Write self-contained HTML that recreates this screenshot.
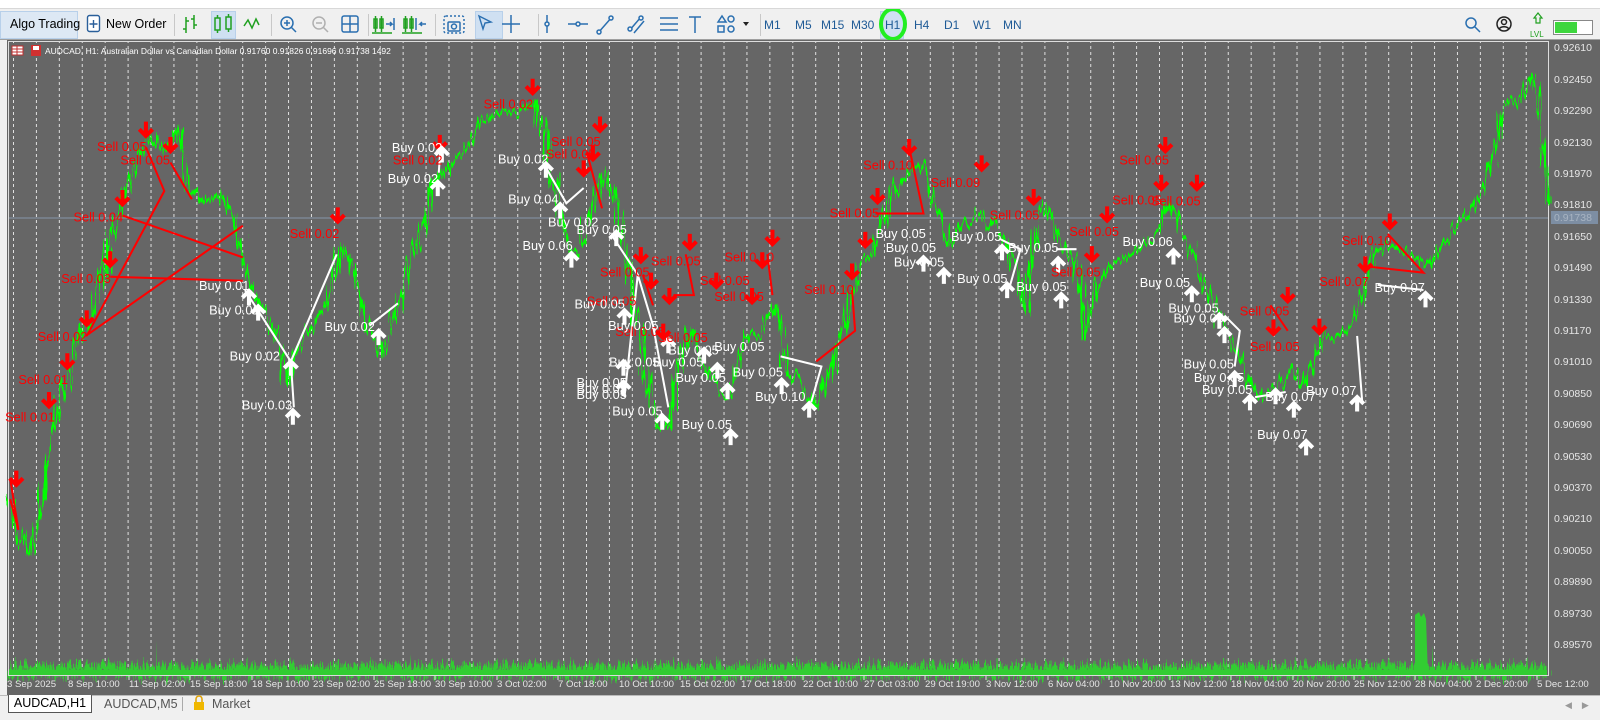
<!DOCTYPE html>
<html><head><meta charset="utf-8"><style>
*{margin:0;padding:0;box-sizing:border-box}
body{width:1600px;height:720px;overflow:hidden;background:#f0f0f0;font-family:"Liberation Sans",Arial,sans-serif;position:relative}
.abs{position:absolute}
.tb{top:8px;left:0;width:1600px;height:32px;background:#f0f0f0;border-top:1px solid #d8d8d8;border-bottom:1px solid #a0a0a0}
.t{position:absolute;top:9px;font-size:12.5px;color:#000}
.tf{position:absolute;top:9px;font-size:12px;color:#1e5a96}
.sep{position:absolute;top:5px;width:1px;height:22px;background:#c8c8c8}
.hl{position:absolute;top:2px;height:28px;background:#cfe0f2;border:1px solid #b8d0ea}
</style></head><body>
<div class="abs" style="top:0;left:0;width:1600px;height:8px;background:#fff"></div>
<div class="abs tb">
 <div class="hl" style="left:0;width:78px;background:#dde8f4"></div>
 <div class="t" style="left:10px;top:8px">Algo Trading</div>
 <svg class="abs" style="left:86px;top:5px" width="16" height="20"><rect x="1.5" y="1.5" width="12" height="16" rx="2" fill="#fff" stroke="#2a5f9a" stroke-width="1.4"/><path d="M7.5 6v8M3.5 10h8" stroke="#2a5f9a" stroke-width="1.4"/></svg>
 <div class="t" style="left:106px;top:8px">New Order</div>
 <div class="sep" style="left:174px"></div>
 <div class="hl" style="left:211px;width:25px"></div>
 <div class="sep" style="left:271px"></div>
 <div class="sep" style="left:368px"></div>
 <div class="sep" style="left:435px"></div>
 <div class="hl" style="left:475px;width:28px"></div>
 <div class="sep" style="left:538px"></div>
 <div class="sep" style="left:760px"></div>
 <div class="hl" style="left:880px;width:24px"></div>
 <svg class="abs" style="left:0;top:0" width="1600" height="32" fill="none" stroke-width="1.5">
  <g stroke="#20a020"><path d="M186 8v16M186 20h-3M186 12h3M194 6v14M194 10h-3M194 16h3"/>
   <rect x="215" y="9" width="5" height="12"/><path d="M217.5 6v3M217.5 21v3"/><rect x="226" y="8" width="5" height="12"/><path d="M228.5 5v3M228.5 20v3"/>
   <path d="M244 17l4-6 4 8 4-9 3 6"/>
   <rect x="374" y="10" width="3" height="9"/><rect x="380" y="10" width="3" height="9"/><path d="M375.5 7v16M381.5 7v16M372 24h20"/>
   <rect x="404" y="10" width="3" height="9"/><rect x="410" y="10" width="3" height="9"/><path d="M405.5 7v16M411.5 7v16M402 24h20"/>
  </g>
  <g stroke="#2a6fb0"><path d="M386 15h6l-2-2M392 15l-2 2M394 9v12"/><path d="M426 15h-6l2-2M420 15l2 2M416 9v12"/>
   <circle cx="287" cy="14" r="6"/><path d="M291 18l5 5M284 14h6M287 11v6"/>
   <g stroke="#b0b0b0"><circle cx="319" cy="14" r="6"/><path d="M323 18l5 5M316 14h6"/></g>
   <rect x="342" y="7" width="16" height="16" rx="2"/><path d="M350 7v16M342 15h16"/>
   <rect x="444" y="7" width="20" height="17" rx="2" stroke-dasharray="2 2"/><rect x="448" y="13" width="12" height="9" rx="1"/><circle cx="454" cy="17.5" r="2.5"/>
   <path d="M479 7l12 6-6 1-2 6z" stroke-width="1.4"/>
   <path d="M511 6v18M502 15h18"/><path d="M547 6v18"/><circle cx="547" cy="15" r="2" fill="#f0f0f0"/>
   <path d="M568 15h20"/><circle cx="578" cy="15" r="2" fill="#f0f0f0"/>
   <path d="M598 24l14-16"/><circle cx="599" cy="23" r="2" fill="#f0f0f0"/><circle cx="611" cy="9" r="2" fill="#f0f0f0"/>
   <path d="M629 22l12-14M634 24l10-12"/><circle cx="630" cy="20" r="2" fill="#f0f0f0"/><circle cx="641" cy="9" r="2" fill="#f0f0f0"/>
   <path d="M660 9h18M660 15h18M660 21h18"/>
   <path d="M689 8h12M695 8v16"/>
   <path d="M718 13l4-6 4 6z"/><circle cx="731" cy="10" r="3"/><rect x="718" y="17" width="6" height="6"/><circle cx="731" cy="20" r="3"/>
   <circle cx="1471" cy="14" r="5"/><path d="M1475 18l5 5"/>
   <circle cx="1504" cy="15" r="7" stroke="#222"/><circle cx="1504" cy="13" r="2.5" stroke="#222"/><path d="M1499 20c2-3 8-3 10 0" stroke="#222"/>
  </g>
  <path d="M743 13l3 4 3-4z" fill="#222" stroke="none"/>
  <path d="M1538 4l-4 5h2v5h4v-5h2z" stroke="#20a020" stroke-width="1.2"/>
  <text x="1530" y="28" font-size="8" fill="#20a020" stroke="none" font-family="Liberation Sans">LVL</text>
  <rect x="1553.5" y="11.5" width="39" height="14" fill="#fff" stroke="#888" stroke-width="1"/><rect x="1555" y="13" width="22" height="11" fill="#3ed63e" stroke="none"/>
  <ellipse cx="893" cy="15" rx="12" ry="15" stroke="#22ee22" stroke-width="4"/>
 </svg>
 <div class="tf" style="left:764px">M1</div><div class="tf" style="left:795px">M5</div><div class="tf" style="left:821px">M15</div><div class="tf" style="left:851px">M30</div><div class="tf" style="left:885px">H1</div><div class="tf" style="left:914px">H4</div><div class="tf" style="left:944px">D1</div><div class="tf" style="left:973px">W1</div><div class="tf" style="left:1003px">MN</div>
</div>

<svg class="abs" style="left:0;top:40px" width="1600" height="655">
 <defs>
  <filter id="nz" x="-5%" y="-20%" width="110%" height="140%"><feTurbulence type="fractalNoise" baseFrequency="0.35 0.02" numOctaves="2" seed="3"/><feDisplacementMap in="SourceGraphic" scale="22" xChannelSelector="B" yChannelSelector="G"/></filter>
  <filter id="nz2" x="-5%" y="-100%" width="110%" height="300%"><feTurbulence type="fractalNoise" baseFrequency="0.6 0.01" numOctaves="3" seed="7"/><feDisplacementMap in="SourceGraphic" scale="26" xChannelSelector="B" yChannelSelector="G"/></filter>
  <pattern id="vl" x="13" y="0" width="22.92" height="655" patternUnits="userSpaceOnUse"><line x1="0.5" y1="0" x2="0.5" y2="655" stroke="#e0e0e0" stroke-width="1" stroke-dasharray="3 3"/></pattern>
  <g id="dn"><path d="M0,-17V-3M-6.5,-9.5L0,-3L6.5,-9.5" stroke="#ff0000" stroke-width="4" fill="none"/></g>
  <g id="up"><path d="M0,17V3M-6.5,9.5L0,3L6.5,9.5" stroke="#ffffff" stroke-width="4" fill="none"/></g>
 </defs>
 <rect x="0" y="0" width="7" height="655" fill="#f0f0f0"/>
 <rect x="7" y="0" width="1593" height="655" fill="#666"/>
 <rect x="8" y="1" width="1540" height="635" fill="url(#vl)"/>
 <line x1="8" y1="178" x2="1549" y2="178" stroke="#8596aa" stroke-width="1"/>
 <!-- volumes -->
 <g filter="url(#nz2)"><rect x="9" y="625" width="1538" height="11" fill="#32cd32"/></g>
 <rect x="9" y="630" width="1538" height="6" fill="#32cd32"/>
 <path d="M1415 636V575l4-3 2 5 3-4 2 6 2 57z" fill="#32cd32"/>
 <path d="M156 636V600l1 36z M1432 636V605l2 31z M410 636v-22l2 22z M718 636v-20l2 20z" fill="#32cd32"/>
 <rect x="8.5" y="1.5" width="1540" height="634" fill="none" stroke="#ddd" stroke-width="1"/>
 <!-- header -->
 <rect x="12" y="6" width="11" height="9" fill="#fff" stroke="#c03030"/><path d="M12 9h11M12 12h11M17 6v9" stroke="#c03030"/>
 <rect x="31" y="5" width="10" height="11" fill="#d03030"/><rect x="33" y="6" width="6" height="4" fill="#fff"/>
 <text x="45" y="14" font-size="8.5" fill="#fff" font-family="Liberation Sans">AUDCAD, H1:  Australian Dollar vs Canadian Dollar  0.91760 0.91826 0.91696 0.91738  1492</text>
 <!-- price axis -->
 <g font-size="10.5" fill="#e6e6e6" font-family="Liberation Sans">
  <text x="1554" y="11">0.92610</text><text x="1554" y="43">0.92450</text><text x="1554" y="74">0.92290</text><text x="1554" y="106">0.92130</text><text x="1554" y="137">0.91970</text><text x="1554" y="168">0.91810</text><text x="1554" y="200">0.91650</text><text x="1554" y="231">0.91490</text><text x="1554" y="263">0.91330</text><text x="1554" y="294">0.91170</text><text x="1554" y="325">0.91010</text><text x="1554" y="357">0.90850</text><text x="1554" y="388">0.90690</text><text x="1554" y="420">0.90530</text><text x="1554" y="451">0.90370</text><text x="1554" y="482">0.90210</text><text x="1554" y="514">0.90050</text><text x="1554" y="545">0.89890</text><text x="1554" y="577">0.89730</text><text x="1554" y="608">0.89570</text>
 </g>
 <rect x="1551" y="171" width="47" height="13" fill="#7d8ea3"/><text x="1554" y="181" font-size="10.5" fill="#a8b4c2" font-family="Liberation Sans">0.91738</text>
 <!-- time axis -->
 <g font-size="9.6" fill="#e6e6e6" font-family="Liberation Sans">
  <text x="7" y="647">3 Sep 2025</text><text x="68" y="647">8 Sep 10:00</text><text x="129" y="647">11 Sep 02:00</text><text x="190" y="647">15 Sep 18:00</text><text x="252" y="647">18 Sep 10:00</text><text x="313" y="647">23 Sep 02:00</text><text x="374" y="647">25 Sep 18:00</text><text x="435" y="647">30 Sep 10:00</text><text x="497" y="647">3 Oct 02:00</text><text x="558" y="647">7 Oct 18:00</text><text x="619" y="647">10 Oct 10:00</text><text x="680" y="647">15 Oct 02:00</text><text x="741" y="647">17 Oct 18:00</text><text x="803" y="647">22 Oct 10:00</text><text x="864" y="647">27 Oct 03:00</text><text x="925" y="647">29 Oct 19:00</text><text x="986" y="647">3 Nov 12:00</text><text x="1048" y="647">6 Nov 04:00</text><text x="1109" y="647">10 Nov 20:00</text><text x="1170" y="647">13 Nov 12:00</text><text x="1231" y="647">18 Nov 04:00</text><text x="1293" y="647">20 Nov 20:00</text><text x="1354" y="647">25 Nov 12:00</text><text x="1415" y="647">28 Nov 04:00</text><text x="1476" y="647">2 Dec 20:00</text><text x="1537" y="647">5 Dec 12:00</text>
 </g>
 <g stroke="#ddd"><path d="M68 636v4M129 636v4M190 636v4M252 636v4M313 636v4M374 636v4M435 636v4M497 636v4M558 636v4M619 636v4M680 636v4M741 636v4M803 636v4M864 636v4M925 636v4M986 636v4M1048 636v4M1109 636v4M1170 636v4M1231 636v4M1293 636v4M1354 636v4M1415 636v4M1476 636v4M1537 636v4"/></g>
 <!-- overlay in view coords -->
 <g transform="translate(0,-40.8) scale(1.0204)">
  <g filter="url(#nz)"><polyline fill="none" stroke="#00ff00" stroke-width="3" stroke-linejoin="round" points="10,490 20,530 30,545 40,500 50,430 60,390 75,340 90,310 100,270 110,230 120,200 130,170 145,130 160,150 175,130 185,180 200,200 215,190 230,215 240,260 255,300 270,330 285,380 290,340 305,320 320,300 335,240 345,260 360,320 375,350 390,300 400,260 415,220 425,180 440,160 455,150 470,120 490,110 510,110 525,100 535,140 545,190 555,240 565,250 575,220 590,170 605,200 615,260 625,320 635,380 645,420 655,420 665,360 675,320 690,360 700,380 715,390 730,330 745,330 760,300 770,360 785,380 800,400 815,360 830,310 840,260 855,250 870,200 890,170 905,160 915,200 930,240 945,220 960,210 980,230 995,260 1005,310 1015,220 1025,200 1040,240 1055,260 1065,330 1075,280 1090,260 1110,250 1120,240 1135,230 1145,200 1160,230 1175,260 1190,300 1205,330 1220,360 1235,390 1250,380 1265,360 1280,380 1295,330 1310,330 1325,320 1335,290 1345,250 1360,240 1380,250 1400,260 1420,230 1440,210 1460,170 1475,100 1490,100 1505,70 1512,140 1518,200"/></g>
  <g stroke="#ff0000" stroke-width="2" fill="none">
   <path d="M10,490 L18,520 L10,470"/><path d="M143,145 L161,188 L85,330 M120,212 L238,253 M238,222 L84,330 M108,272 L238,276 M167,160 L188,196"/>
   <path d="M575,150 L590,205 M858,210 L905,210 L892,150 M1340,262 L1395,268 L1360,230"/>
   <path d="M630,270 L640,300 M660,290 L680,290 L672,250 M752,250 L757,290 M800,355 L838,325 L835,285 M1245,300 L1262,325"/>
  </g>
  <g stroke="#ffffff" stroke-width="2" fill="none">
   <path d="M240,285 L285,355 L288,400 M285,355 L330,250 M362,320 L390,298 M430,170 L432,140 M535,165 L555,200 L572,185 M600,232 L625,270 L612,390 M625,270 L640,320 L655,400 M765,350 L805,360 L795,395 M980,235 L1000,245 L990,280 M1035,245 L1055,245 M1200,310 L1215,325 L1210,360 M1230,390 L1260,385 M1330,330 L1335,395 M1350,280 L1395,285"/>
  </g>
  <g>
   <use href="#dn" x="143" y="137"/><use href="#dn" x="167" y="152"/><use href="#dn" x="120" y="204"/><use href="#dn" x="108" y="264"/><use href="#dn" x="85" y="322"/><use href="#dn" x="66" y="364"/><use href="#dn" x="48" y="402"/><use href="#dn" x="16" y="479"/>
   <use href="#dn" x="331" y="221"/><use href="#dn" x="522" y="95"/><use href="#dn" x="431" y="150"/><use href="#dn" x="588" y="132"/><use href="#dn" x="572" y="175"/><use href="#dn" x="581" y="160"/>
   <use href="#dn" x="891" y="154"/><use href="#dn" x="962" y="170"/><use href="#dn" x="1142" y="152"/><use href="#dn" x="1138" y="189"/><use href="#dn" x="1173" y="189"/><use href="#dn" x="860" y="202"/><use href="#dn" x="848" y="245"/><use href="#dn" x="835" y="276"/>
   <use href="#dn" x="1362" y="227"/><use href="#dn" x="1338" y="269"/><use href="#dn" x="1262" y="299"/><use href="#dn" x="1248" y="331"/><use href="#dn" x="1293" y="330"/><use href="#dn" x="1070" y="259"/><use href="#dn" x="1013" y="203"/><use href="#dn" x="1085" y="220"/>
   <use href="#dn" x="757" y="243"/><use href="#dn" x="676" y="247"/><use href="#dn" x="628" y="260"/><use href="#dn" x="656" y="300"/><use href="#dn" x="737" y="300"/><use href="#dn" x="638" y="285"/><use href="#dn" x="650" y="335"/><use href="#dn" x="702" y="285"/><use href="#dn" x="747" y="265"/>
   <use href="#up" x="433" y="143"/><use href="#up" x="429" y="176"/><use href="#up" x="535" y="158"/><use href="#up" x="549" y="198"/><use href="#up" x="560" y="246"/><use href="#up" x="604" y="225"/>
   <use href="#up" x="244" y="283"/><use href="#up" x="253" y="298"/><use href="#up" x="285" y="352"/><use href="#up" x="287" y="400"/><use href="#up" x="371" y="322"/>
   <use href="#up" x="612" y="302"/><use href="#up" x="611" y="352"/><use href="#up" x="611" y="372"/><use href="#up" x="649" y="405"/><use href="#up" x="716" y="420"/><use href="#up" x="766" y="370"/><use href="#up" x="793" y="393"/><use href="#up" x="690" y="340"/><use href="#up" x="703" y="355"/><use href="#up" x="713" y="375"/><use href="#up" x="655" y="330"/>
   <use href="#up" x="905" y="250"/><use href="#up" x="925" y="262"/><use href="#up" x="982" y="239"/><use href="#up" x="987" y="276"/><use href="#up" x="1037" y="251"/><use href="#up" x="1040" y="286"/><use href="#up" x="1150" y="243"/><use href="#up" x="1168" y="280"/><use href="#up" x="1195" y="306"/><use href="#up" x="1210" y="363"/><use href="#up" x="1225" y="386"/><use href="#up" x="1268" y="393"/><use href="#up" x="1280" y="430"/><use href="#up" x="1330" y="387"/><use href="#up" x="1397" y="285"/><use href="#up" x="1200" y="320"/><use href="#up" x="1250" y="380"/>
  </g>
  <g font-size="12.5" fill="#ff0000" font-family="Liberation Sans">
   <text x="95" y="149">Sell 0.05</text><text x="118" y="162">Sell 0.05</text><text x="72" y="218">Sell 0.04</text><text x="60" y="278">Sell 0.03</text><text x="37" y="335">Sell 0.02</text><text x="18" y="377">Sell 0.01</text><text x="5" y="414">Sell 0.01</text>
   <text x="284" y="234">Sell 0.02</text><text x="474" y="107">Sell 0.02</text><text x="385" y="162">Sell 0.02</text><text x="540" y="144">Sell 0.05</text><text x="535" y="156">Sell 0.05</text>
   <text x="846" y="167">Sell 0.10</text><text x="912" y="184">Sell 0.09</text><text x="1097" y="162">Sell 0.05</text><text x="1090" y="201">Sell 0.05</text><text x="1128" y="202">Sell 0.05</text><text x="813" y="214">Sell 0.05</text>
   <text x="1315" y="241">Sell 0.10</text><text x="1293" y="281">Sell 0.07</text><text x="1215" y="310">Sell 0.05</text><text x="1225" y="345">Sell 0.05</text><text x="1030" y="272">Sell 0.05</text><text x="970" y="216">Sell 0.05</text><text x="1048" y="232">Sell 0.05</text>
   <text x="710" y="257">Sell 0.10</text><text x="638" y="261">Sell 0.05</text><text x="588" y="272">Sell 0.05</text><text x="575" y="300">Sell 0.05</text><text x="686" y="280">Sell 0.05</text><text x="700" y="296">Sell 0.05</text><text x="788" y="289">Sell 0.10</text><text x="603" y="330">Sell 0.05</text><text x="645" y="336">Sell 0.05</text>
  </g>
  <g font-size="12.5" fill="#ffffff" font-family="Liberation Sans">
   <text x="384" y="150">Buy 0.02</text><text x="380" y="180">Buy 0.02</text><text x="488" y="161">Buy 0.02</text><text x="498" y="200">Buy 0.04</text><text x="537" y="223">Buy 0.02</text><text x="512" y="246">Buy 0.06</text><text x="565" y="230">Buy 0.05</text>
   <text x="195" y="285">Buy 0.01</text><text x="205" y="309">Buy 0.01</text><text x="225" y="354">Buy 0.02</text><text x="237" y="402">Buy 0.03</text><text x="318" y="325">Buy 0.02</text>
   <text x="563" y="303">Buy 0.05</text><text x="596" y="324">Buy 0.05</text><text x="597" y="360">Buy 0.05</text><text x="565" y="380">Buy 0.05</text><text x="565" y="386">Buy 0.05</text><text x="565" y="392">Buy 0.05</text><text x="600" y="408">Buy 0.05</text><text x="668" y="421">Buy 0.05</text><text x="640" y="360">Buy 0.05</text><text x="655" y="348">Buy 0.05</text><text x="662" y="375">Buy 0.05</text><text x="718" y="370">Buy 0.05</text><text x="740" y="394">Buy 0.10</text><text x="700" y="345">Buy 0.05</text>
   <text x="858" y="234">Buy 0.05</text><text x="868" y="248">Buy 0.05</text><text x="876" y="262">Buy 0.05</text><text x="932" y="237">Buy 0.05</text><text x="938" y="278">Buy 0.05</text><text x="988" y="248">Buy 0.05</text><text x="996" y="286">Buy 0.05</text>
   <text x="1100" y="242">Buy 0.06</text><text x="1117" y="282">Buy 0.05</text><text x="1145" y="307">Buy 0.05</text><text x="1150" y="317">Buy 0.05</text><text x="1160" y="362">Buy 0.05</text><text x="1170" y="375">Buy 0.05</text><text x="1178" y="387">Buy 0.05</text><text x="1240" y="394">Buy 0.07</text><text x="1232" y="431">Buy 0.07</text><text x="1280" y="388">Buy 0.07</text><text x="1347" y="287">Buy 0.07</text>
  </g>
 </g>
</svg>

<!-- tabs -->
<div class="abs" style="top:695px;left:0;width:1600px;height:25px;background:#f0f0f0;border-top:1px solid #bbb"></div>
<div class="abs" style="top:695px;left:8px;width:84px;height:18px;background:#fff;border:1px solid #555;border-top:none;font-size:12.5px;text-align:center;line-height:16px">AUDCAD,H1</div>
<div class="abs" style="top:697px;left:104px;font-size:12.5px;color:#555">AUDCAD,M5</div>
<div class="abs" style="top:697px;left:182px;width:1px;height:14px;background:#aaa"></div>
<svg class="abs" style="left:192px;top:695px" width="14" height="16"><path d="M4 7V4a3 3 0 0 1 6 0v3" stroke="#e0a000" fill="none" stroke-width="1.5"/><rect x="2" y="7" width="10" height="8" fill="#f0b800"/></svg>
<div class="abs" style="top:697px;left:212px;font-size:12.5px;color:#555">Market</div>
<div class="abs" style="top:700px;left:1565px;font-size:9px;color:#999">◀&nbsp;&nbsp;&nbsp;&nbsp;▶</div>
</body></html>
